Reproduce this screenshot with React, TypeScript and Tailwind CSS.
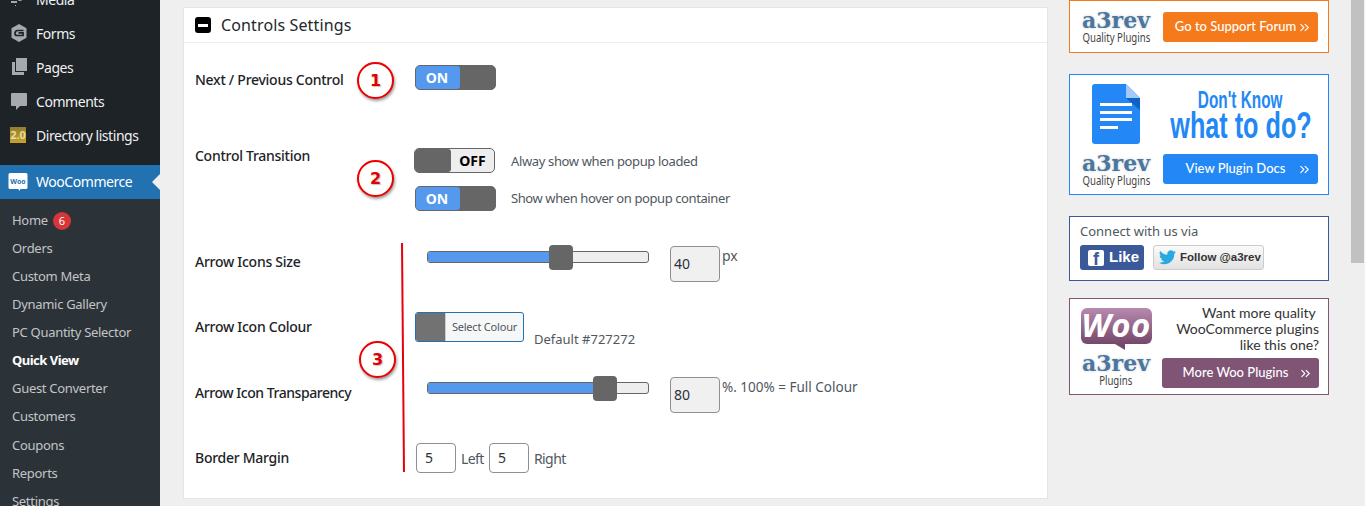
import type { ReactNode } from 'react'
import { ChevronsRight } from 'lucide-react'

const font = { fontFamily: '"Noto Sans", "Open Sans", sans-serif' }

function MenuIcon({ name }: { name: string }) {
  if (name === 'media') {
    return (
      <svg width="20" height="20" viewBox="0 0 20 20" fill="#a7aaad">
        <path d="M2 -3h16v5h-4v7a3 3 0 1 1-2-2.800V2H2zM2 4h6v2H2zM2 8h6v2H2zM2 12h6v2H2zM6 16h1v1H6z" />
      </svg>
    )
  }
  if (name === 'forms') {
    return (
      <svg width="20" height="20" viewBox="0 0 20 20">
        <path d="M10 1l7.500 4.300v9.400L10 19l-7.500-4.300V5.300z" fill="#a7aaad" />
        <path d="M14.500 7.500H8.500Q6.500 7.500 6 10q-.3 2.500 2 2.500h6V9.800H9.500" fill="none" stroke="#1d2327" strokeWidth="1.700" />
      </svg>
    )
  }
  if (name === 'pages') {
    return (
      <svg width="20" height="20" viewBox="0 0 20 20" fill="#a7aaad">
        <path d="M7 1h11v13H7z" />
        <path d="M3 5h3v10h9v3H3z" />
      </svg>
    )
  }
  if (name === 'comments') {
    return (
      <svg width="20" height="20" viewBox="0 0 20 20" fill="#a7aaad">
        <path d="M3 2h14a1 1 0 0 1 1 1v11a1 1 0 0 1-1 1h-6l-4 4v-4H3a1 1 0 0 1-1-1V3a1 1 0 0 1 1-1z" />
      </svg>
    )
  }
  return (
    <div className="ml-px w-[16px] h-[16px] bg-gradient-to-b from-[#8f7f2c] to-[#c9a227] text-[#e8d9a0] text-[11px] leading-[16px] font-bold text-center" style={font}>
      2.0
    </div>
  )
}

function MainItem({ icon, label }: { icon: string; label: string }) {
  return (
    <div className="flex items-center h-[34px] pl-[8px] text-[14px] text-[#f0f0f1]">
      <div className="w-[28px] flex justify-start pl-px">
        <MenuIcon name={icon} />
      </div>
      <span className="tracking-[-0.45px]">{label}</span>
    </div>
  )
}

function SubItem({ label, active, children }: { label: string; active?: boolean; children?: ReactNode }) {
  return (
    <div className={`flex items-center h-[28.1px] pl-[12px] text-[13px] ${active ? 'font-bold text-white tracking-[-0.5px]' : 'text-[#c3c4c7] tracking-[-0.3px]'}`}>
      <span>{label}</span>
      {children}
    </div>
  )
}

function Sidebar() {
  return (
    <div className="w-[160px] h-full shrink-0 bg-[#1d2327] overflow-hidden">
      <div className="mt-[-18px]">
        <MainItem icon="media" label="Media" />
        <MainItem icon="forms" label="Forms" />
        <MainItem icon="pages" label="Pages" />
        <MainItem icon="comments" label="Comments" />
        <MainItem icon="dir" label="Directory listings" />
      </div>
      <div className="relative mt-[13px] h-[34px] bg-[#2271b1] flex items-center pl-[8px] text-[14px] text-white">
        <svg width="20" height="20" viewBox="0 0 20 20" className="mr-[8px] -mt-px">
          <path d="M2 1h16a1.500 1.500 0 0 1 1.500 1.500v13a1.500 1.500 0 0 1-1.500 1.500h-5.500l-1 2-1.200-2H2A1.500 1.500 0 0 1 .5 15.500v-13A1.500 1.500 0 0 1 2 1z" fill="#fff" />
          <text x="10" y="12" textAnchor="middle" fontSize="7" fontWeight="700" fill="#2271b1" style={font}>Woo</text>
        </svg>
        <span className="tracking-[-0.45px] -mt-px">WooCommerce</span>
        <div className="absolute right-0 top-[9px] border-y-[8px] border-y-transparent border-r-[8px] border-r-[#efefef]" />
      </div>
      <div className="bg-[#2c3338] pt-[7.500px] pb-2 h-full">
        <SubItem label="Home">
          <span className="ml-[5px] w-[18px] h-[18px] rounded-full bg-[#d63638] text-white text-[11px] leading-[18px] text-center">6</span>
        </SubItem>
        <SubItem label="Orders" />
        <SubItem label="Custom Meta" />
        <SubItem label="Dynamic Gallery" />
        <SubItem label="PC Quantity Selector" />
        <SubItem label="Quick View" active />
        <SubItem label="Guest Converter" />
        <SubItem label="Customers" />
        <SubItem label="Coupons" />
        <SubItem label="Reports" />
        <SubItem label="Settings" />
      </div>
    </div>
  )
}

function Toggle({ on }: { on: boolean }) {
  if (on) {
    return (
      <div className="w-[81px] h-[25px] flex rounded-[5px] overflow-hidden border border-[#666] bg-[#666]">
        <div className="w-[44px] bg-[#5599ee] rounded-r-[3px] pr-[2px] text-white text-[14px] font-bold leading-[24px] text-center">ON</div>
      </div>
    )
  }
  return (
    <div className="w-[81px] h-[25px] flex rounded-[5px] overflow-hidden border border-[#666] bg-[#eeeeee]">
      <div className="w-[36px] bg-[#666] rounded-r-[3px]" />
      <div className="flex-1 text-black text-[14px] font-bold leading-[24px] text-center">OFF</div>
    </div>
  )
}

function Slider({ fill, thumb }: { fill: number; thumb: number }) {
  return (
    <div className="relative w-[222px] h-[12px] mt-[5px] ml-[12px] rounded-[3px] border border-[#666] bg-[#eeeeee]">
      <div className="h-full bg-[#5599ee] rounded-l-[2px]" style={{ width: fill }} />
      <div className="absolute top-[-7px] w-[24px] h-[25px] rounded-[4px] bg-[#666]" style={{ left: thumb }} />
    </div>
  )
}

function ValueBox({ value }: { value: string }) {
  return (
    <div className="w-[50px] h-[36px] ml-[21px] rounded-[4px] border border-[#8c8f94] bg-[#f0f0f1] text-[14px] text-[#2c3338] pl-[3px] pt-[6px]">
      {value}
    </div>
  )
}

function SmallInput({ value }: { value: string }) {
  return (
    <div className="w-[40px] h-[30px] rounded-[4px] border border-[#8c8f94] bg-white text-[14px] leading-[28px] text-[#2c3338] pl-[8px]">
      {value}
    </div>
  )
}

function Numbered({ n, top, left }: { n: number; top: number; left: number }) {
  return (
    <div
      className="absolute w-[37px] h-[37px] rounded-full border-2 border-[#ee0000] bg-white text-[#e00000] text-[16px] font-bold leading-[33px] text-center shadow-[1px_2px_3px_rgba(0,0,0,0.4)] [text-shadow:1px_1px_1px_rgba(0,0,0,0.25)]"
      style={{ top, left, fontFamily: '"DejaVu Sans", sans-serif' }}
    >
      {n}
    </div>
  )
}

function Row({ label, className, labelClass, children }: { label: string; className: string; labelClass: string; children: ReactNode }) {
  return (
    <div className={`flex ${className}`}>
      <div className={`w-[220px] shrink-0 text-[14px] text-[#1d2327] font-medium tracking-[-0.27px] ${labelClass}`}>{label}</div>
      <div className="flex-1">{children}</div>
    </div>
  )
}

function SettingsCard() {
  return (
    <div className="relative w-[865px] h-[492px] mt-[7px] bg-white border border-[#e5e5e5] shrink-0">
      <div className="h-[35px] flex items-center pl-[11px] border-b border-[#eeeeee]">
        <div className="w-[16px] h-[16px] rounded-[3px] bg-black flex items-center justify-center mr-[10px]">
          <div className="w-[10px] h-[3px] bg-white" />
        </div>
        <span className="text-[16px] text-[#23282d] tracking-[0.13px]">Controls Settings</span>
      </div>

      <div className="pl-[11px]">
        <Row label="Next / Previous Control" className="mt-[22px] h-[25px]" labelClass="pt-[4px]">
          <Toggle on />
        </Row>

        <Row label="Control Transition" className="mt-[58px]" labelClass="-mt-[3px]">
          <div className="-ml-px flex items-center gap-[16px] h-[25px]">
            <Toggle on={false} />
            <span className="text-[13px] text-[#50575e] tracking-[-0.36px] pt-[2px]">Alway show when popup loaded</span>
          </div>
          <div className="mt-[13px] flex items-center gap-[15px] h-[25px]">
            <Toggle on />
            <span className="text-[13px] text-[#50575e] tracking-[-0.4px] pt-px">Show when hover on popup container</span>
          </div>
        </Row>

        <Row label="Arrow Icons Size" className="mt-[35px] h-[36px]" labelClass="pt-[5px]">
          <div className="flex">
            <Slider fill={124} thumb={121} />
            <ValueBox value="40" />
            <span className="ml-[2px] text-[14px] text-[#50575e] leading-[20px]">px</span>
          </div>
        </Row>

        <Row label="Arrow Icon Colour" className="mt-[30px] h-[30px]" labelClass="pt-[4px]">
          <div className="flex">
            <div className="w-[109px] h-[30px] flex rounded-[3px] border border-[#2271b1] bg-[#f6f7f7] overflow-hidden">
              <div className="w-[30px] bg-[#727272] border-r border-[#ccc]" />
              <span className="flex-1 text-center text-[11px] leading-[28px] text-[#50575e] tracking-[-0.2px]">Select Colour</span>
            </div>
            <span className="ml-[10px] mt-[17px] text-[13px] text-[#50575e] leading-[20px]">Default #727272</span>
          </div>
        </Row>

        <Row label="Arrow Icon Transparency" className="mt-[35px] h-[36px]" labelClass="pt-[5px] tracking-[-0.45px]">
          <div className="flex">
            <Slider fill={165} thumb={165} />
            <ValueBox value="80" />
            <span className="ml-[2px] text-[13.500px] text-[#50575e] leading-[20px]">%. 100% = Full Colour</span>
          </div>
        </Row>

        <Row label="Border Margin" className="mt-[30px] h-[30px]" labelClass="pt-[4px]">
          <div className="flex items-center ml-px text-[14px] text-[#50575e]">
            <SmallInput value="5" />
            <span className="ml-[5px] mr-[5px] w-[23px] tracking-[-0.6px]">Left</span>
            <SmallInput value="5" />
            <span className="ml-[5px] tracking-[-0.6px]">Right</span>
          </div>
        </Row>
      </div>

      <Numbered n={1} top={54} left={173} />
      <Numbered n={2} top={152} left={173} />
      <Numbered n={3} top={333} left={175} />
      <div className="absolute left-[218px] top-[235px] w-[2px] h-[229px] bg-[#e8000d] -rotate-[0.5deg]" />
    </div>
  )
}

function A3revLogo({ caption }: { caption: string }) {
  return (
    <div className="w-[72px] flex flex-col items-center shrink-0">
      <div
        className="text-[22px] leading-[20px] font-bold text-[#4a77a0] [text-shadow:0_0_3px_#cfcfcf]"
        style={{ fontFamily: '"DejaVu Serif", serif' }}
      >
        a3rev
      </div>
      <div className="text-[12px] leading-[16px] text-[#444] whitespace-nowrap scale-x-[0.8]">{caption}</div>
    </div>
  )
}

function PromoButton({ label, color, wide }: { label: string; color: string; wide?: boolean }) {
  return (
    <div className={`h-[30px] rounded-[3px] ${color} ${wide ? 'w-[157px]' : 'w-[155px]'} flex items-center justify-between pl-[11px] pr-[6px] text-white text-[13px] font-medium`} style={{ fontFamily: 'Lato, sans-serif' }}>
      <span className="flex-1 text-center whitespace-nowrap">{label}</span>
      <ChevronsRight size={15} strokeWidth={1.75} />
    </div>
  )
}

function RightColumn() {
  return (
    <div className="w-[260px] ml-[21px] shrink-0 flex flex-col">
      <div className="h-[53px] border border-[#f47a20] bg-white flex items-end pb-[6px] pl-[10px] pr-[10px] justify-between">
        <A3revLogo caption="Quality Plugins" />
        <div className="mb-[4px]"><PromoButton label="Go to Support Forum" color="bg-[#f47a1c]" /></div>
      </div>

      <div className="h-[121px] mt-[21px] border border-[#2388f5] bg-white flex justify-between pl-[10px] pr-[10px] pt-[9px]">
        <div className="flex flex-col items-center">
          <svg width="48" height="60" viewBox="0 0 48 60">
            <path d="M3 0h31l14 14v43a3 3 0 0 1-3 3H3a3 3 0 0 1-3-3V3a3 3 0 0 1 3-3z" fill="#2388f5" />
            <path d="M34 0l14 14H34z" fill="#a3c8fb" />
            <path d="M34 14h14v12z" fill="#0d62c4" />
            <path d="M8 19h32v3H8zM8 27h32v3H8zM8 34h32v3H8zM8 42h18v3H8z" fill="#fff" />
          </svg>
          <div className="mt-[9px]"><A3revLogo caption="Quality Plugins" /></div>
        </div>
        <div className="w-[155px] flex flex-col items-center">
          <div className="text-[24px] leading-[24px] font-bold text-[#2388f5] scale-x-[0.64] whitespace-nowrap mt-[4px]" style={{ fontFamily: '"Liberation Sans", sans-serif' }}>Don't Know</div>
          <div className="text-[36px] leading-[27px] font-bold text-[#2388f5] scale-x-[0.7] whitespace-nowrap" style={{ fontFamily: '"Liberation Sans", sans-serif' }}>what to do?</div>
          <div className="mt-[15px]"><PromoButton label="View Plugin Docs" color="bg-[#2388f5]" /></div>
        </div>
      </div>

      <div className="h-[65px] mt-[21px] border border-[#3b5998] bg-white pl-[10px] pt-[5px]">
        <div className="text-[13px] leading-[18px] text-[#50575e]">Connect with us via</div>
        <div className="flex mt-[5px] gap-[9px]">
          <div className="w-[64px] h-[25px] rounded-[3px] bg-[#3b5998] flex items-center pl-[8px] gap-[5px] text-white text-[15px] font-bold" style={{ fontFamily: '"Liberation Sans", sans-serif' }}>
            <div className="w-[16px] h-[16px] bg-white rounded-[2px] relative overflow-hidden">
              <span className="absolute left-[5px] top-[-1px] text-[#3b5998] text-[18px] leading-[20px]">f</span>
            </div>
            Like
          </div>
          <div className="w-[111px] h-[25px] rounded-[3px] border border-[#ccc] bg-gradient-to-b from-[#fafafa] to-[#e2e2e2] flex items-center pl-[5px] gap-[4px] text-[#333] text-[11.500px] font-bold" style={{ fontFamily: '"Liberation Sans", sans-serif' }}>
            <svg width="17" height="15" viewBox="0 0 24 20" fill="#2aa9e0">
              <path d="M24 2.400a9.800 9.800 0 0 1-2.800.8A4.900 4.900 0 0 0 23.300.500a9.800 9.800 0 0 1-3.100 1.200 4.900 4.900 0 0 0-8.400 4.500A14 14 0 0 1 1.700.9a4.900 4.900 0 0 0 1.500 6.600 4.900 4.900 0 0 1-2.200-.6 4.900 4.900 0 0 0 3.900 4.900 4.900 4.900 0 0 1-2.200.1 4.900 4.900 0 0 0 4.600 3.400A9.900 9.900 0 0 1 0 17.300 14 14 0 0 0 21.500 4.900a10 10 0 0 0 2.500-2.500z" />
            </svg>
            Follow @a3rev
          </div>
        </div>
      </div>

      <div className="h-[97px] mt-[17px] border border-[#7f5475] bg-white flex justify-between pl-[10px] pr-[9px] pt-[9px]">
        <div className="flex flex-col items-center w-[72px]">
          <div className="relative w-[71px] h-[36px] rounded-[6px] bg-gradient-to-b from-[#b98aaf] to-[#75496b] text-white text-[33px] leading-[34px] font-bold italic text-center tracking-[0.5px]" style={{ fontFamily: '"Open Sans", sans-serif' }}>
            Woo
            <div className="absolute left-[34px] top-[36px] border-t-[6px] border-t-[#75496b] border-l-[10px] border-l-transparent" />
          </div>
          <div className="mt-[9px]"><A3revLogo caption="Plugins" /></div>
        </div>
        <div className="flex flex-col items-end -mt-[3px]" style={{ fontFamily: 'Lato, sans-serif' }}>
          <div className="text-[14px] leading-[16px] text-[#333] text-right">Want more quality&nbsp;<br />WooCommerce plugins<br />like this one?</div>
          <div className="mt-[5px]"><PromoButton label="More Woo Plugins" color="bg-[#7f5475]" wide /></div>
        </div>
      </div>
    </div>
  )
}

export default function App() {
  return (
    <div className="w-[1365px] h-[506px] flex overflow-hidden bg-[#efefef]" style={font}>
      <Sidebar />
      <div className="ml-[23px]"><SettingsCard /></div>
      <RightColumn />
      <div className="ml-auto w-[13px] h-[263px] bg-[#c1c1c1] mr-px" />
    </div>
  )
}
